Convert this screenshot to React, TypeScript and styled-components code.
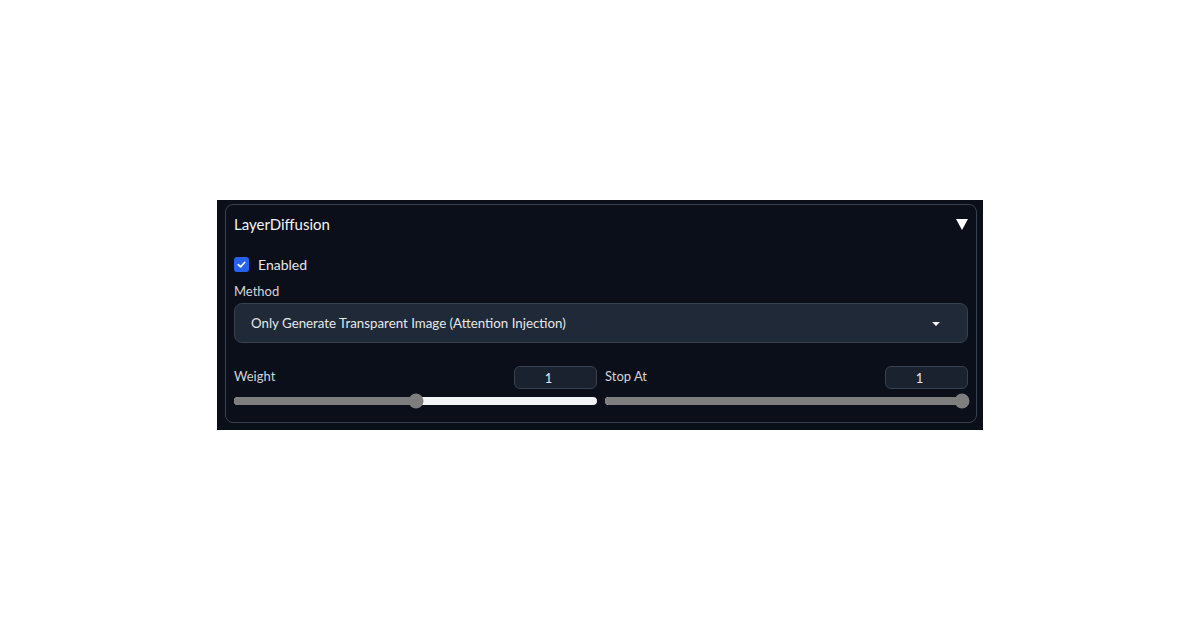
import styled, { createGlobalStyle } from 'styled-components';

const GlobalStyle = createGlobalStyle`
  body {
    margin: 0;
    background: #ffffff;
    font-family: Lato, 'Noto Sans', sans-serif;
  }
`;

const Page = styled.div`
  height: 100vh;
  display: flex;
  align-items: center;
  justify-content: center;
`;

const Frame = styled.div`
  width: 766px;
  height: 230px;
  box-sizing: border-box;
  background: #0b0f19;
  padding: 4px 6px 7px 8px;
`;

const Block = styled.div`
  height: 100%;
  box-sizing: border-box;
  border: 1px solid #374151;
  border-radius: 8px;
  padding: 0 8px;
  display: flex;
  flex-direction: column;
`;

const Header = styled.div`
  height: 39px;
  display: flex;
  align-items: center;
  justify-content: space-between;
`;

const Title = styled.div`
  font-size: 15px;
  color: #f3f4f6;
  margin-top: -2px;
`;

const Toggle = styled.div`
  width: 0;
  height: 0;
  border-left: 6.5px solid transparent;
  border-right: 6.5px solid transparent;
  border-top: 11px solid #ffffff;
  margin-top: -1px;
`;

const CheckRow = styled.label`
  display: flex;
  align-items: center;
  gap: 9px;
  height: 40px;
`;

const Box = styled.span`
  width: 15px;
  height: 15px;
  border-radius: 3px;
  background: #2563eb;
  display: flex;
  align-items: center;
  justify-content: center;
`;

const CheckText = styled.span`
  font-size: 14px;
  color: #e5e7eb;
`;

const Label = styled.div`
  font-size: 13px;
  color: #d1d5db;
  line-height: 18px;
`;

const MethodLabel = styled(Label)`
  height: 16px;
  margin-top: -2px;
  margin-bottom: 5px;
`;

const Select = styled.div`
  height: 40px;
  box-sizing: border-box;
  background: #1f2937;
  border: 1px solid #374151;
  border-radius: 8px;
  display: flex;
  align-items: center;
  justify-content: space-between;
  padding: 0 27px 0 16px;
`;

const SelectText = styled.span`
  font-size: 13.3px;
  color: #e5e7eb;
`;

const Caret = styled.span`
  width: 0;
  height: 0;
  border-left: 4px solid transparent;
  border-right: 4px solid transparent;
  border-top: 4px solid #ffffff;
  margin-top: 2px;
`;

const SliderRow = styled.div`
  display: grid;
  grid-template-columns: 1fr 1fr;
  gap: 8px;
  margin-top: 23px;
`;

const SliderGroup = styled.div`
  display: flex;
  flex-direction: column;
`;

const SliderHead = styled.div`
  display: flex;
  justify-content: space-between;
  align-items: flex-start;
`;

const NumberBox = styled.div`
  width: 83px;
  height: 23px;
  box-sizing: border-box;
  border: 1px solid #374151;
  border-radius: 6px;
  background: #1a2230;
  color: #e5e7eb;
  font-size: 13px;
  display: flex;
  align-items: center;
  justify-content: center;
  padding-right: 14px;
`;

const Track = styled.div`
  position: relative;
  height: 8px;
  border-radius: 4px;
  margin-top: 8px;
  background: #f3f4f6;
`;

const Fill = styled.div`
  height: 100%;
  border-radius: 4px;
  background: #7e7e7e;
`;

const Thumb = styled.div`
  position: absolute;
  top: 50%;
  width: 15px;
  height: 15px;
  border-radius: 50%;
  background: #7e7e7e;
  transform: translate(-50%, -50%);
`;

interface SliderProps {
  label: string;
  value: string;
  percent: number;
}

const Slider = ({ label, value, percent }: SliderProps) => (
  <SliderGroup>
    <SliderHead>
      <Label style={{ marginTop: 1 }}>{label}</Label>
      <NumberBox>{value}</NumberBox>
    </SliderHead>
    <Track>
      <Fill style={{ width: `${percent}%` }} />
      <Thumb style={{ left: `calc(${percent}% - ${(percent - 50) * 0.13}px)` }} />
    </Track>
  </SliderGroup>
);

export default function App() {
  return (
    <Page>
      <GlobalStyle />
      <Frame>
        <Block>
          <Header>
            <Title>LayerDiffusion</Title>
            <Toggle />
          </Header>
          <CheckRow>
            <Box>
              <svg width="11" height="11" viewBox="0 0 12 12">
                <path d="M2.5 6.2 L5 8.6 L9.6 3.6" fill="none" stroke="#fff" strokeWidth="1.8" strokeLinecap="round" strokeLinejoin="round" />
              </svg>
            </Box>
            <CheckText>Enabled</CheckText>
          </CheckRow>
          <MethodLabel>Method</MethodLabel>
          <Select>
            <SelectText>Only Generate Transparent Image (Attention Injection)</SelectText>
            <Caret />
          </Select>
          <SliderRow>
            <Slider label="Weight" value="1" percent={50} />
            <Slider label="Stop At" value="1" percent={100} />
          </SliderRow>
        </Block>
      </Frame>
    </Page>
  );
}
